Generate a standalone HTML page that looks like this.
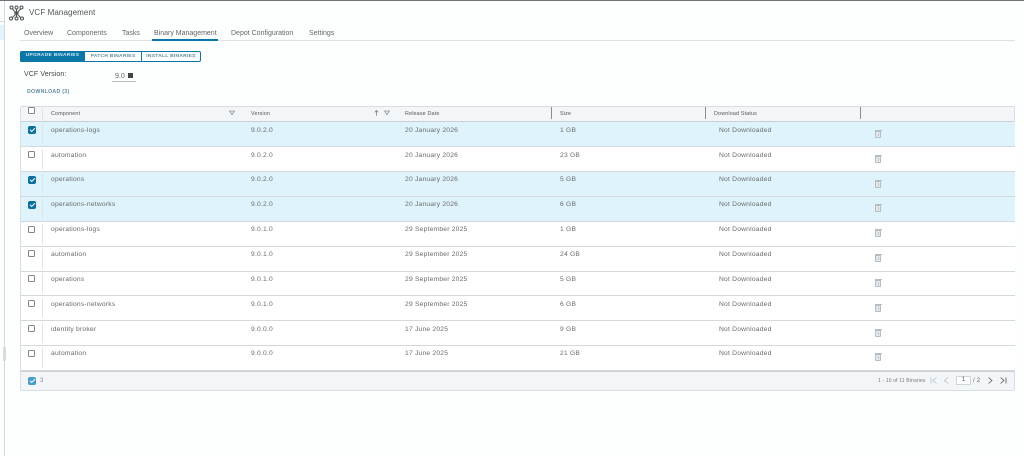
<!DOCTYPE html>
<html><head><meta charset="utf-8"><style>
html,body{margin:0;padding:0;background:#fff}
#p{position:relative;width:1024px;height:456px;overflow:hidden;background:#fdfefe;font-family:"Liberation Sans",sans-serif;color:#565656;font-size:7px;filter:blur(.3px)}
#p div{position:absolute;white-space:nowrap;box-sizing:border-box}
.tab{top:28.5px;font-size:7px;line-height:9px;color:#666}
.h{top:110.5px;font-size:5.4px;line-height:7px;letter-spacing:.15px;color:#555}
.row{left:21px;width:994px;height:25px;border-bottom:1px solid #d3dadd;background:#fff}
#p .sel{background:#dff3fd}
.c{font-size:6.7px;line-height:8px;letter-spacing:.22px;color:#6a6a6a;margin-top:1px}
.cb{left:28px;width:7px;height:7px;border:1px solid #858585;border-radius:1.5px;background:#fff}
.cs{left:28px;width:8px;height:8px;border-radius:2px;background:#0b6e9e}
.cs:after{content:"";position:absolute;left:2px;top:1.5px;width:3.5px;height:2px;border-left:1px solid #fff;border-bottom:1px solid #fff;transform:rotate(-45deg)}
.d{left:42px;width:1px;height:20px;background:#e0e4e7}
.t{left:875px;width:6px;height:7px;background:#e3e8ea;border-radius:0 0 1px 1px;border:1px solid #b4bdc2;margin-top:-1px}
.t:before{content:"";position:absolute;left:-1.5px;top:-2px;width:7px;height:1px;background:#b4bdc2}
.t:after{content:"";position:absolute;left:1.5px;top:.5px;width:1px;height:3.5px;background:#c3cbcf}
.rs{top:107px;width:1px;height:12px;background:#8d8d8d}
.b{top:52px;height:10px;font-size:4.9px;line-height:10px;font-weight:bold;letter-spacing:.28px;text-align:center;color:#5f8aa0}
</style></head><body><div id="p">
<div style="left:0;top:0;width:1024px;height:1px;background:#6b7478"></div>
<div style="left:4px;top:1px;width:1px;height:455px;background:#d5d9db"></div>
<div style="left:0;top:21px;width:4px;height:1px;background:#d5d9db"></div>
<div style="left:0;top:25px;width:4px;height:15px;background:#e3f3fb"></div>
<div style="left:3px;top:347px;width:3px;height:14px;background:#d9dcde"></div>

<svg style="position:absolute;left:9px;top:5px" width="15" height="16" viewBox="0 0 15 16" fill="none" stroke="#4a4f52" stroke-width="1"><circle cx="2.5" cy="2.5" r="1.5"/><circle cx="7.5" cy="2.5" r="1.5"/><circle cx="12.5" cy="2.5" r="1.5"/><circle cx="2" cy="13.5" r="1.5"/><circle cx="7.5" cy="13.5" r="1.5"/><circle cx="13" cy="13.5" r="1.5"/><path d="M3.5 4l8 8.5M11.5 4l-8 8.5M7.5 4v8M5 8h5"/></svg>
<div style="left:29px;top:7px;font-size:8px;line-height:11px;letter-spacing:.1px;color:#555">VCF Management</div>

<div class="tab" style="left:24px">Overview</div>
<div class="tab" style="left:67px">Components</div>
<div class="tab" style="left:122px">Tasks</div>
<div class="tab" style="left:154px">Binary Management</div>
<div class="tab" style="left:231px">Depot Configuration</div>
<div class="tab" style="left:309px">Settings</div>
<div style="left:20px;top:40px;width:995px;height:1px;background:#dde1e3"></div>
<div style="left:152px;top:39px;width:66px;height:2px;background:#0b77a8"></div>

<div style="left:20px;top:51px;width:181px;height:11px;border:1px solid #0b77a8;border-radius:2px"></div>
<div class="b" style="left:20px;top:51px;width:65px;height:11px;background:#0b77a8;color:#cfe8f4;border-radius:2px 0 0 2px">UPGRADE BINARIES</div>
<div class="b" style="left:85px;width:56px">PATCH BINARIES</div>
<div style="left:141px;top:51px;width:1px;height:11px;background:#0b77a8"></div>
<div class="b" style="left:141px;width:60px">INSTALL BINARIES</div>

<div style="left:24px;top:70px;font-size:7px;line-height:9px;letter-spacing:.1px;color:#444">VCF Version:</div>
<div style="left:115px;top:71.5px;font-size:7px;line-height:9px;color:#666">9.0</div>
<div style="left:128px;top:73px;width:5px;height:5px;background:#444"></div>
<div style="left:112px;top:81px;width:24px;height:1px;background:#b5bbbe"></div>
<div style="left:27px;top:89px;font-size:5.2px;line-height:7px;letter-spacing:.3px;color:#5f8aa0;font-weight:bold">DOWNLOAD (3)</div>

<div style="left:20px;top:106px;width:995px;height:285px;border:1px solid #d7dde0;border-radius:2px"></div>
<div style="left:21px;top:107px;width:993px;height:15px;background:#f2f6f8;border-bottom:1.5px solid #c9d0d4"></div>
<div class="cb" style="top:107px;left:28px"></div>
<div class="d" style="top:108px;height:12px"></div>
<div class="h" style="left:51px">Component</div>
<div class="h" style="left:251px">Version</div>
<div class="h" style="left:405px">Release Date</div>
<div class="h" style="left:560px">Size</div>
<div class="h" style="left:714px">Download Status</div>
<svg style="position:absolute;left:229px;top:110px" width="6" height="6" viewBox="0 0 6 6" fill="none" stroke="#8a949a" stroke-width=".8"><path d="M.5 1h5L3 4.5z"/></svg>
<svg style="position:absolute;left:384px;top:110px" width="6" height="6" viewBox="0 0 6 6" fill="none" stroke="#8a949a" stroke-width=".8"><path d="M.5 1h5L3 4.5z"/></svg>
<svg style="position:absolute;left:374px;top:110px" width="5" height="6" viewBox="0 0 5 6" fill="none" stroke="#777" stroke-width=".7"><path d="M2.5 6V.5M.8 2.2L2.5.5l1.7 1.7"/></svg>
<div class="rs" style="left:551px"></div>
<div class="rs" style="left:705px"></div>
<div class="rs" style="left:860px"></div>

<div class="row sel" style="top:122px"></div>
<div class="row" style="top:147px"></div>
<div class="row sel" style="top:172px"></div>
<div class="row sel" style="top:197px"></div>
<div class="row" style="top:222px"></div>
<div class="row" style="top:247px"></div>
<div class="row" style="top:272px;height:24px"></div>
<div class="row" style="top:296px"></div>
<div class="row" style="top:321px"></div>
<div class="row" style="top:346px"></div>

<div class="cs" style="top:126px"></div><div class="d" style="top:124px"></div><div class="c" style="left:51px;top:126px">operations-logs</div><div class="c" style="left:251px;top:126px">9.0.2.0</div><div class="c" style="left:405px;top:126px">20 January 2026</div><div class="c" style="left:560px;top:126px">1 GB</div><div class="c" style="left:719px;top:126px">Not Downloaded</div><div class="t" style="top:132px"></div>
<div class="cb" style="top:151px"></div><div class="d" style="top:149px"></div><div class="c" style="left:51px;top:151px">automation</div><div class="c" style="left:251px;top:151px">9.0.2.0</div><div class="c" style="left:405px;top:151px">20 January 2026</div><div class="c" style="left:560px;top:151px">23 GB</div><div class="c" style="left:719px;top:151px">Not Downloaded</div><div class="t" style="top:157px"></div>
<div class="cs" style="top:176px"></div><div class="d" style="top:174px"></div><div class="c" style="left:51px;top:175px">operations</div><div class="c" style="left:251px;top:175px">9.0.2.0</div><div class="c" style="left:405px;top:175px">20 January 2026</div><div class="c" style="left:560px;top:175px">5 GB</div><div class="c" style="left:719px;top:175px">Not Downloaded</div><div class="t" style="top:182px"></div>
<div class="cs" style="top:201px"></div><div class="d" style="top:199px"></div><div class="c" style="left:51px;top:200px">operations-networks</div><div class="c" style="left:251px;top:200px">9.0.2.0</div><div class="c" style="left:405px;top:200px">20 January 2026</div><div class="c" style="left:560px;top:200px">6 GB</div><div class="c" style="left:719px;top:200px">Not Downloaded</div><div class="t" style="top:206px"></div>
<div class="cb" style="top:226px"></div><div class="d" style="top:224px"></div><div class="c" style="left:51px;top:225px">operations-logs</div><div class="c" style="left:251px;top:225px">9.0.1.0</div><div class="c" style="left:405px;top:225px">29 September 2025</div><div class="c" style="left:560px;top:225px">1 GB</div><div class="c" style="left:719px;top:225px">Not Downloaded</div><div class="t" style="top:231px"></div>
<div class="cb" style="top:250px"></div><div class="d" style="top:249px"></div><div class="c" style="left:51px;top:250px">automation</div><div class="c" style="left:251px;top:250px">9.0.1.0</div><div class="c" style="left:405px;top:250px">29 September 2025</div><div class="c" style="left:560px;top:250px">24 GB</div><div class="c" style="left:719px;top:250px">Not Downloaded</div><div class="t" style="top:256px"></div>
<div class="cb" style="top:275px"></div><div class="d" style="top:273px"></div><div class="c" style="left:51px;top:275px">operations</div><div class="c" style="left:251px;top:275px">9.0.1.0</div><div class="c" style="left:405px;top:275px">29 September 2025</div><div class="c" style="left:560px;top:275px">5 GB</div><div class="c" style="left:719px;top:275px">Not Downloaded</div><div class="t" style="top:281px"></div>
<div class="cb" style="top:300px"></div><div class="d" style="top:298px"></div><div class="c" style="left:51px;top:300px">operations-networks</div><div class="c" style="left:251px;top:300px">9.0.1.0</div><div class="c" style="left:405px;top:300px">29 September 2025</div><div class="c" style="left:560px;top:300px">6 GB</div><div class="c" style="left:719px;top:300px">Not Downloaded</div><div class="t" style="top:306px"></div>
<div class="cb" style="top:325px"></div><div class="d" style="top:323px"></div><div class="c" style="left:51px;top:325px">identity broker</div><div class="c" style="left:251px;top:325px">9.0.0.0</div><div class="c" style="left:405px;top:325px">17 June 2025</div><div class="c" style="left:560px;top:325px">9 GB</div><div class="c" style="left:719px;top:325px">Not Downloaded</div><div class="t" style="top:331px"></div>
<div class="cb" style="top:350px"></div><div class="d" style="top:348px"></div><div class="c" style="left:51px;top:349px">automation</div><div class="c" style="left:251px;top:349px">9.0.0.0</div><div class="c" style="left:405px;top:349px">17 June 2025</div><div class="c" style="left:560px;top:349px">21 GB</div><div class="c" style="left:719px;top:349px">Not Downloaded</div><div class="t" style="top:355px"></div>

<div style="left:21px;top:371px;width:993px;height:19px;background:#f2f6f8;border-top:1.5px solid #c9d0d4"></div>
<div class="cs" style="top:377px;background:#4a9ccb"></div>
<div class="c" style="left:40px;top:376px;font-size:6px;color:#888">3</div>
<div class="c" style="left:878px;top:377px;font-size:5px;line-height:7px;letter-spacing:.15px;color:#777">1 - 10 of 11 Binaries</div>
<svg style="position:absolute;left:929px;top:376px" width="80" height="9" viewBox="0 0 80 9" fill="none" stroke-width=".8"><path d="M2 1.5v6M7.5 1.5L4 4.5l3.5 3" stroke="#b5bcc0"/><path d="M19 1.5L15.500 4.500l3.500 3" stroke="#b5bcc0"/><path d="M59.500 1.500L63 4.500l-3.500 3" stroke="#555"/><path d="M71.500 1.500L75 4.500l-3.500 3M77 1.500v6" stroke="#555"/></svg>
<div style="left:956px;top:376px;width:15px;height:9px;background:#fff;border:1px solid #d0d5d8;font-size:6px;line-height:7px;text-align:center;color:#555">1</div>
<div class="c" style="left:973px;top:376.500px;font-size:6px;line-height:7px;color:#666">/ 2</div>
</div></body></html>
